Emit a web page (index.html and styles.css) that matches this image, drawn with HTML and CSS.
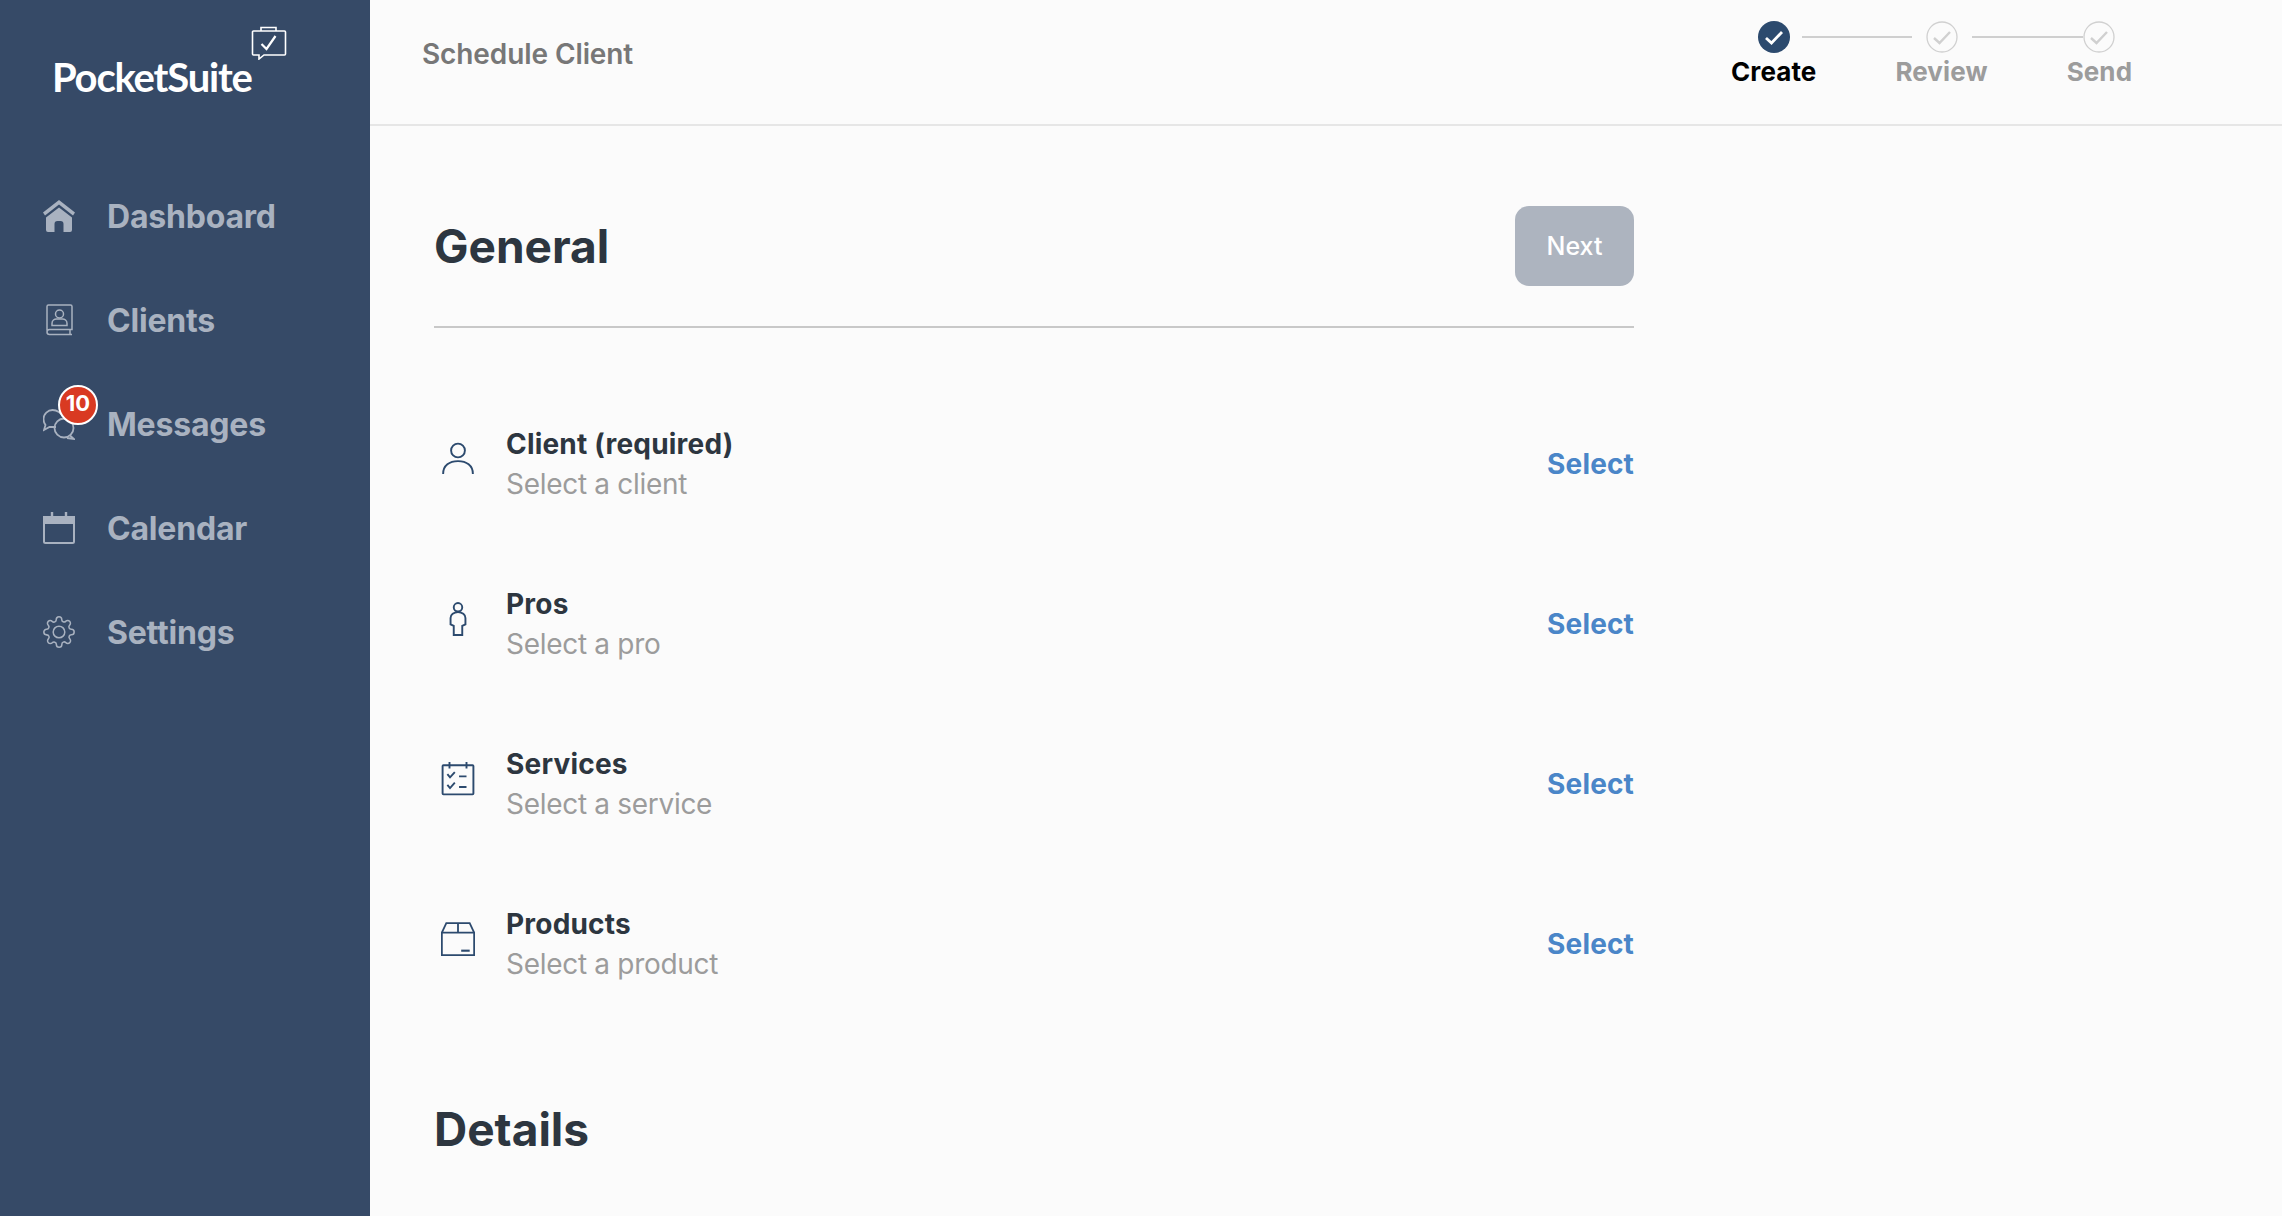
FILE: index.html
```html
<!DOCTYPE html>
<html lang="en">
<head>
<meta charset="utf-8">
<title>Schedule Client</title>
<link rel="stylesheet" href="styles.css">
</head>
<body>
<div class="app">
  <aside class="sidebar">
    <div class="logo">
      <span class="logo-text">PocketSuite</span>
      <svg class="logo-icon" viewBox="0 0 36 34" fill="none" stroke="#fff" stroke-width="1.6"><path d="M10 5V1.500h15V5"/><path d="M2.500 5h31a1 1 0 0 1 1 1v22a1 1 0 0 1-1 1H13l-5 4v-4H2.500a1 1 0 0 1-1-1V6a1 1 0 0 1 1-1z"/><path d="M10.500 18l5 5 9-13" stroke-width="2.200"/></svg>
    </div>
    <nav class="nav">
      <a class="nav-item"><svg class="nav-icon" viewBox="0 0 32 32" fill="#a9b2c0"><path d="M16 0L0 12.500 2 15.500 16 4.500 30 15.500 32 12.500z"/><path d="M16 7.500L3 17.500V30a2 2 0 0 0 2 2h6.500v-8a3 3 0 0 1 3-3h3a3 3 0 0 1 3 3v8H27a2 2 0 0 0 2-2V17.500z"/></svg><span>Dashboard</span></a>
      <a class="nav-item"><svg class="nav-icon" viewBox="0 0 32 32" fill="none" stroke="#a9b2c0" stroke-width="1.500"><path d="M4 26.500V2.500A1.500 1.500 0 0 1 5.500 1h22A1.500 1.500 0 0 1 29 2.500V25.500H6.500A2.500 2.500 0 0 0 4 28v0a2.500 2.500 0 0 0 2.500 2.500H29M27 25.500v5"/><circle cx="16.500" cy="10" r="4"/><path d="M9 21.500v-2c0-3 2.500-4.500 4.500-4.500h6c2 0 4.500 1.500 4.500 4.500v2z"/></svg><span>Clients</span></a>
      <a class="nav-item"><span class="icon-wrap"><svg class="nav-icon" viewBox="0 0 32 32" fill="none" stroke="#a9b2c0" stroke-width="1.800"><path d="M13 19H6.500L1 22l1.500-5C1 15 .5 13 .5 11c0-5 4.500-9 9-9s9 3 10.500 7"/><circle cx="21" cy="20" r="9.500"/><path d="M27 27.500l4 3.500-7-1"/></svg><b class="badge">10</b></span><span>Messages</span></a>
      <a class="nav-item"><svg class="nav-icon" viewBox="0 0 32 32" fill="none" stroke="#a9b2c0" stroke-width="2"><rect x="1" y="5" width="30" height="26" rx="1.500"/><path d="M1 5h30v6H1z" fill="#a9b2c0"/><path d="M9 0v7M23 0v7" stroke-width="2.400"/></svg><span>Calendar</span></a>
      <a class="nav-item"><svg class="nav-icon" viewBox=".4 .4 23.200 23.200" fill="none" stroke="#a9b2c0" stroke-width="1.100"><circle cx="12" cy="12" r="4.200"/><path d="M19.400 15a1.650 1.650 0 0 0 .33 1.820l.06.06a2 2 0 0 1 0 2.830 2 2 0 0 1-2.830 0l-.06-.06a1.650 1.650 0 0 0-1.820-.33 1.650 1.650 0 0 0-1 1.510V21a2 2 0 0 1-2 2 2 2 0 0 1-2-2v-.09A1.650 1.650 0 0 0 9 19.400a1.650 1.650 0 0 0-1.820.33l-.06.06a2 2 0 0 1-2.830 0 2 2 0 0 1 0-2.830l.06-.06a1.650 1.650 0 0 0 .33-1.820 1.650 1.650 0 0 0-1.510-1H3a2 2 0 0 1-2-2 2 2 0 0 1 2-2h.09A1.650 1.650 0 0 0 4.600 9a1.650 1.650 0 0 0-.33-1.820l-.06-.06a2 2 0 0 1 0-2.830 2 2 0 0 1 2.830 0l.06.06a1.650 1.650 0 0 0 1.820.33H9a1.650 1.650 0 0 0 1-1.510V3a2 2 0 0 1 2-2 2 2 0 0 1 2 2v.09a1.650 1.650 0 0 0 1 1.510 1.650 1.650 0 0 0 1.820-.33l.06-.06a2 2 0 0 1 2.830 0 2 2 0 0 1 0 2.830l-.06.06a1.650 1.650 0 0 0-.33 1.820V9a1.650 1.650 0 0 0 1.510 1H21a2 2 0 0 1 2 2 2 2 0 0 1-2 2h-.09a1.650 1.650 0 0 0-1.510 1z"/></svg><span>Settings</span></a>
    </nav>
  </aside>
  <div class="content">
    <header class="topbar">
      <div class="page-title">Schedule Client</div>
      <div class="stepper">
        <div class="step step-active">
          <svg class="step-icon" viewBox="0 0 32 32"><circle cx="16" cy="16" r="16" fill="#2c4a6e"/><path d="M8 17l5.500 5 10.500-11" fill="none" stroke="#fff" stroke-width="2.800"/></svg>
          <span>Create</span>
          <div class="step-line line-one"></div>
        </div>
        <div class="step">
          <svg class="step-icon" viewBox="0 0 32 32"><circle cx="16" cy="16" r="15" fill="none" stroke="#d0d0d0" stroke-width="1.300"/><path d="M8 17l5.500 5 10.500-11" fill="none" stroke="#d0d0d0" stroke-width="2.400"/></svg>
          <span>Review</span>
          <div class="step-line line-two"></div>
        </div>
        <div class="step">
          <svg class="step-icon" viewBox="0 0 32 32"><circle cx="16" cy="16" r="15" fill="none" stroke="#d0d0d0" stroke-width="1.300"/><path d="M8 17l5.500 5 10.500-11" fill="none" stroke="#d0d0d0" stroke-width="2.400"/></svg>
          <span>Send</span>
        </div>
      </div>
    </header>
    <main class="main">
      <div class="section-head">
        <h1>General</h1>
        <button class="next">Next</button>
      </div>
      <div class="rows">
        <div class="row">
          <svg class="row-icon" viewBox="0 0 32 32" fill="none" stroke="#2c4a6e" stroke-width="1.800"><circle cx="16" cy="8" r="6.500"/><path d="M2 30c0-8 6-12 14-12s14 4 14 12"/></svg>
          <div class="row-text"><div class="row-title">Client (required)</div><div class="row-sub">Select a client</div></div>
          <a class="select">Select</a>
        </div>
        <div class="row">
          <svg class="row-icon" viewBox="0 0 32 32" fill="none" stroke="#2c4a6e" stroke-width="1.800"><circle cx="16" cy="5" r="4"/><path d="M12 31h8V22.500l3-1.500v-6c0-3-3-5.500-7-5.500S9 12 9 15v6l3 1.500z"/></svg>
          <div class="row-text"><div class="row-title">Pros</div><div class="row-sub">Select a pro</div></div>
          <a class="select">Select</a>
        </div>
        <div class="row">
          <svg class="row-icon" viewBox="0 0 32 32" fill="none" stroke="#2c4a6e" stroke-width="1.800"><rect x="1.500" y="3" width="29" height="27.500" rx=".8"/><path d="M8 0v6M24 0v6"/><path d="M6 11.500l2.500 3L13 9.500M6 21.500l2.500 3L13 19.500"/><path d="M17 13.500h7M17 23.500h7"/></svg>
          <div class="row-text"><div class="row-title">Services</div><div class="row-sub">Select a service</div></div>
          <a class="select">Select</a>
        </div>
        <div class="row">
          <svg class="row-icon" viewBox="0 0 32 32" fill="none" stroke="#2c4a6e" stroke-width="1.700"><path d="M.800 10h30.400v21.200H.800zM.800 10L5 1h22l4.200 9M16 1v9"/><path d="M19 27h8" stroke-width="2"/></svg>
          <div class="row-text"><div class="row-title">Products</div><div class="row-sub">Select a product</div></div>
          <a class="select">Select</a>
        </div>
      </div>
      <h1 class="details">Details</h1>
    </main>
  </div>
</div>
</body>
</html>
```
FILE: styles.css
```css
* { box-sizing: border-box; }
html, body { margin: 0; height: 100%; overflow: hidden; }
body { font-family: Inter, "Noto Sans", sans-serif; background: #fbfbfb; }
.app { display: flex; height: 1216px; }

.sidebar { width: 370px; flex: none; background: #364a67; }
.logo { position: relative; height: 124px; padding: 55px 0 0 52px; }
.logo-text { font-family: Lato, sans-serif; font-weight: 700; font-size: 40px; line-height: 44px; color: #fff; display: block; letter-spacing: -1.200px; }
.logo-icon { position: absolute; left: 251px; top: 26px; width: 36px; height: 34px; }
.nav { display: flex; flex-direction: column; padding: 40px 0 0 43px; }
.nav-item { display: flex; align-items: center; height: 104px; gap: 32px; font-size: 32px; font-weight: 700; letter-spacing: -.2px; color: #a9b2c0; }
.nav-icon { width: 32px; height: 32px; flex: none; display: block; }
.icon-wrap { position: relative; display: block; width: 32px; height: 32px; flex: none; }
.badge { position: absolute; left: 15px; top: -23px; width: 40px; height: 40px; border-radius: 50%; border: 2px solid #fff; background: #d93a22; color: #fff; font-size: 22px; font-weight: 700; letter-spacing: 0; line-height: 33px; text-align: center; }

.content { flex: 1; min-width: 0; display: flex; flex-direction: column; }
.topbar { position: relative; height: 126px; flex: none; border-bottom: 2px solid #e6e6e6; display: flex; padding: 0 0 0 52px; }
.page-title { font-size: 28px; font-weight: 600; letter-spacing: -.1px; color: #777; line-height: 34px; margin-top: 37px; }
.stepper { position: absolute; left: 1361px; top: 21px; display: flex; align-items: flex-start; gap: 79px; }
.step { position: relative; display: flex; flex-direction: column; align-items: center; gap: 3px; font-size: 26px; font-weight: 700; letter-spacing: .1px; line-height: 32px; color: #9c9c9c; }
.step-active { color: #000; }
.step-icon { width: 32px; height: 32px; display: block; }
.step-line { position: absolute; top: 15px; height: 2px; background: #cfcfcf; }
.line-one { width: 110px; left: calc(50% + 28px); }
.line-two { width: 111px; left: calc(50% + 30px); }

.main { width: 1264px; padding: 0 0 0 64px; }
.section-head { display: flex; align-items: center; justify-content: space-between; height: 202px; padding: 80px 0 40px; border-bottom: 2px solid #c8c8c8; }
h1 { margin: 0; font-size: 46px; font-weight: 700; color: #2d3640; line-height: 54px; }
.next { width: 119px; height: 80px; border: 0; border-radius: 14px; background: #adb4bf; color: #fff; font: 500 25px Inter, sans-serif; }
.rows { padding-top: 56px; }
.row { display: flex; align-items: center; height: 160px; }
.row-icon { width: 34px; height: 34px; margin: 0 0 11px 7px; flex: none; }
.row-text { flex: 1; margin-left: 31px; }
.row-title { font-size: 28px; font-weight: 700; letter-spacing: .2px; line-height: 40px; color: #2d3640; }
.row-sub { font-size: 28px; font-weight: 400; letter-spacing: -.3px; line-height: 40px; color: #9c9c9c; }
.select { font-size: 28px; font-weight: 700; letter-spacing: .15px; color: #4a86c8; }
.details { margin-top: 78px; }
```
